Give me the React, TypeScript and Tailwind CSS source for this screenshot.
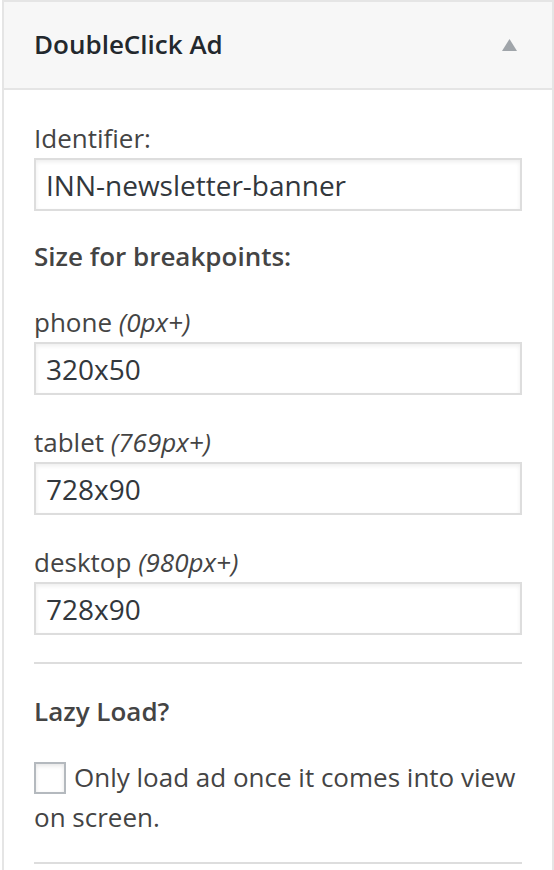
const font = { fontFamily: '"Open Sans", "Noto Sans", sans-serif' }

interface SizeFieldProps {
  device: string
  range: string
  value: string
  first?: boolean
}

function TextInput({ value }: { value: string }) {
  return (
    <input
      type="text"
      defaultValue={value}
      className="mt-[2px] block h-[53px] w-full border-2 border-[#dddddd] bg-white px-[10px] text-[28px] text-[#32373c] shadow-[inset_0_2px_4px_rgba(0,0,0,0.07)] outline-none"
    />
  )
}

function SizeField({ device, range, value, first }: SizeFieldProps) {
  return (
    <div className={first ? 'mt-[30px]' : 'mt-[29px]'}>
      <label className="block text-[26px] leading-[36px] text-[#444444]">
        {device} <em>({range})</em>
      </label>
      <TextInput value={value} />
    </div>
  )
}

export default function App() {
  return (
    <div className="min-h-[870px] bg-white pl-[2px]" style={font}>
      <div className="w-[552px] border-2 border-[#e5e5e5] pb-[40px]">
        <div className="flex h-[88px] items-center justify-between border-b-2 border-[#e5e5e5] bg-[#f7f7f7] pb-[2px] pl-[30px] pr-[35px]">
          <h3 className="text-[26px] font-semibold leading-[36px] text-[#23282d]">
            DoubleClick Ad
          </h3>
          <svg width="15" height="12" viewBox="0 0 15 12" className="mt-[2px]">
            <path d="M7.5 0 L15 12 L0 12 Z" fill="#a0a5aa" />
          </svg>
        </div>

        <div className="px-[30px] pt-[30px]">
          <label className="block text-[26px] leading-[36px] text-[#444444]">
            Identifier:
          </label>
          <TextInput value="INN-newsletter-banner" />

          <p className="mt-[27px] text-[26px] font-semibold leading-[36px] text-[#444444]">
            Size for breakpoints:
          </p>

          <SizeField device="phone" range="0px+" value="320x50" first />
          <SizeField device="tablet" range="769px+" value="728x90" />
          <SizeField device="desktop" range="980px+" value="728x90" />

          <hr className="mt-[27px] border-t-2 border-[#dddddd]" />

          <p className="mt-[29px] text-[26px] font-semibold leading-[36px] text-[#444444]">
            Lazy Load?
          </p>

          <p className="mt-[28px] text-[26px] leading-[40px] text-[#444444]">
            <span className="mr-[8px] inline-block h-[32px] w-[32px] border-2 border-[#b4b9be] bg-white align-[-7px] shadow-[inset_0_2px_4px_rgba(0,0,0,0.1)]" />
            Only load ad once it comes into view on screen.
          </p>

          <hr className="mt-[25px] border-t-2 border-[#dddddd]" />
        </div>
      </div>
    </div>
  )
}
